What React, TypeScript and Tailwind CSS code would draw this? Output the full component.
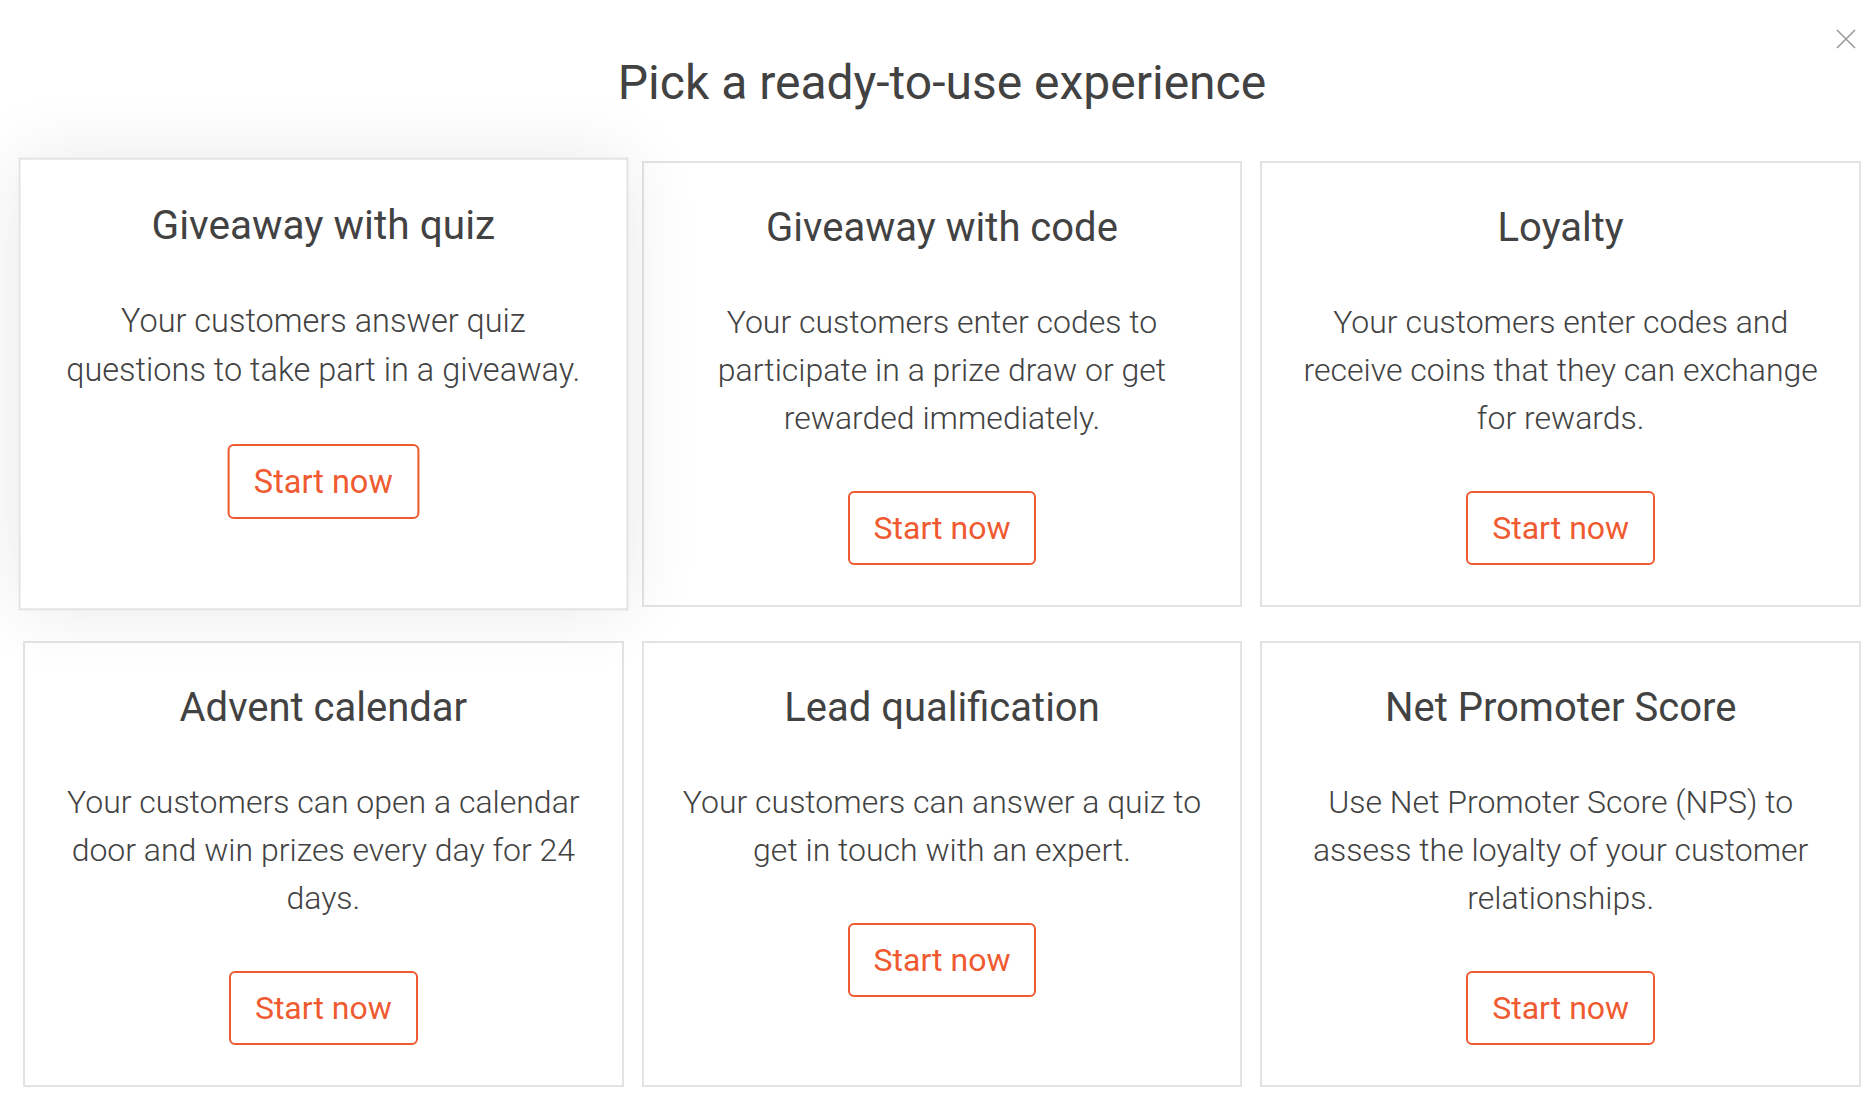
type Experience = {
  title: string;
  description: string;
};

const EXPERIENCES: Experience[] = [
  {
    title: "Giveaway with quiz",
    description: "Your customers answer quiz questions to take part in a giveaway.",
  },
  {
    title: "Giveaway with code",
    description: "Your customers enter codes to participate in a prize draw or get rewarded immediately.",
  },
  {
    title: "Loyalty",
    description: "Your customers enter codes and receive coins that they can exchange for rewards.",
  },
  {
    title: "Advent calendar",
    description: "Your customers can open a calendar door and win prizes every day for 24 days.",
  },
  {
    title: "Lead qualification",
    description: "Your customers can answer a quiz to get in touch with an expert.",
  },
  {
    title: "Net Promoter Score",
    description: "Use Net Promoter Score (NPS) to assess the loyalty of your customer relationships.",
  },
];

function ExperienceCard({ item, active }: { item: Experience; active?: boolean }) {
  return (
    <div
      className={`flex flex-col items-center border-2 border-[#e3e3e3] bg-white px-[30px] pt-[41px] pb-[40px] text-center ${
        active ? "scale-[1.015] shadow-[0_0_70px_rgba(0,0,0,0.09)]" : ""
      }`}
    >
      <h2 className="text-[40px] leading-[48px] font-normal text-[#424242]">{item.title}</h2>
      <p className="mt-[46px] text-[32px] leading-[48px] font-light text-[#424242]">{item.description}</p>
      <button className="mt-[49px] h-[74px] rounded-[6px] border-2 border-[#f05a30] px-[24px] text-[32px] font-normal text-[#f05a30]">
        Start now
      </button>
    </div>
  );
}

export default function App() {
  return (
    <div className="relative min-h-[1106px] w-[1870px] bg-white font-['Roboto',sans-serif]">
      <button className="absolute right-[14px] top-[29px] text-[#9a9a9a]">
        <svg width="20" height="20" viewBox="0 0 20 20" fill="none" stroke="currentColor" strokeWidth="1.6">
          <path d="M1 1L19 19M19 1L1 19" />
        </svg>
      </button>
      <div className="pl-[23px] pr-[9px] pt-[50px]">
        <h1 className="text-center text-[48px] leading-[66px] font-normal text-[#424242]">
          Pick a ready-to-use experience
        </h1>
        <div className="mt-[45px] grid grid-cols-3 gap-x-[18px] gap-y-[34px]">
          {EXPERIENCES.map((item, i) => (
            <ExperienceCard key={item.title} item={item} active={i === 0} />
          ))}
        </div>
      </div>
    </div>
  );
}
